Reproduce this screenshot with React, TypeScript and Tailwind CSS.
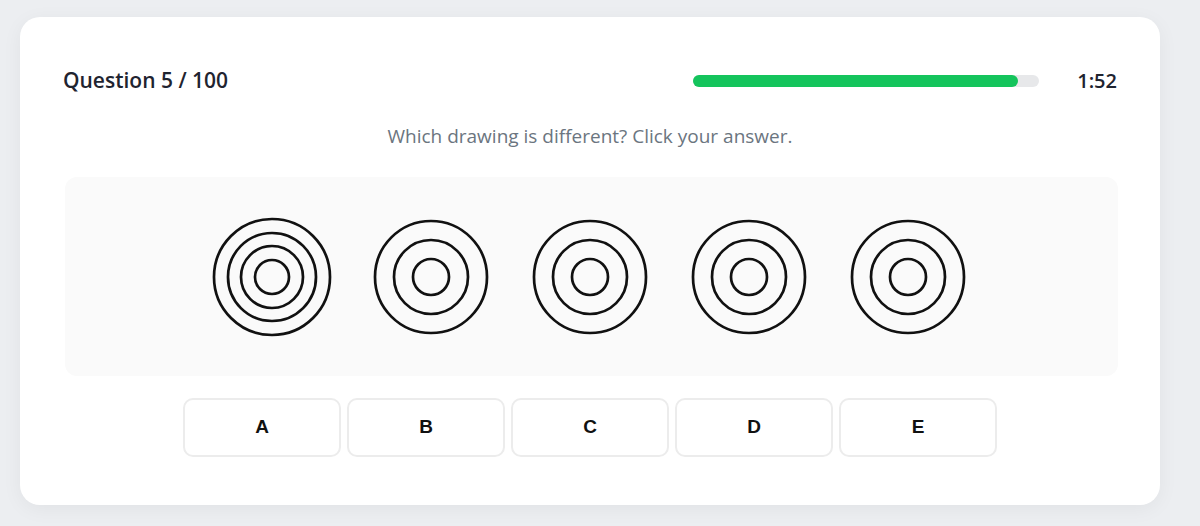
const options = ["A", "B", "C", "D", "E"];

// ring radii for each drawing; the first one has an extra ring
const drawings: number[][] = [
  [58, 44, 31, 17],
  [56, 37, 18],
  [56, 37, 18],
  [56, 37, 18],
  [56, 37, 18],
];

function Rings({ radii }: { radii: number[] }) {
  return (
    <svg width="120" height="120" viewBox="0 0 120 120" className="shrink-0">
      {radii.map((r) => (
        <circle key={r} cx="60" cy="60" r={r} fill="none" stroke="#111" strokeWidth="2.7" />
      ))}
    </svg>
  );
}

export default function App() {
  return (
    <div className="min-h-[526px] w-full bg-[#eceef1] pl-[20px] pt-[17px] pb-[21px]" style={{ fontFamily: '"Open Sans", "Noto Sans", sans-serif' }}>
      <div className="w-[1140px] rounded-[20px] bg-white px-[43px] pt-[50px] pb-[48px] shadow-[0_4px_20px_rgba(0,0,0,0.05)]">
        <div className="flex h-[28px] items-center justify-between">
          <h2 className="text-[21px] font-semibold text-[#1f2430]">Question 5 / 100</h2>
          <div className="flex items-center gap-[38px]">
            <div className="h-[12px] w-[346px] rounded-full bg-[#e7e8ea]">
              <div className="h-full w-[94%] rounded-full bg-[#14c45c]" />
            </div>
            <span className="text-[20px] font-semibold text-[#1f2430]">1:52</span>
          </div>
        </div>

        <p className="mt-[27px] text-center text-[19px] leading-[28px] text-[#6b7580]">
          Which drawing is different? Click your answer.
        </p>

        <div className="ml-[2px] mr-[-1px] mt-[27px] flex h-[199px] items-center justify-center gap-[39px] rounded-[12px] bg-[#fafafa] pr-[3px]">
          {drawings.map((radii, i) => (
            <Rings key={i} radii={radii} />
          ))}
        </div>

        <div className="mt-[22px] flex justify-center gap-[6px]">
          {options.map((o) => (
            <button
              key={o}
              className="h-[59px] w-[158px] rounded-[10px] border-2 border-[#ececec] bg-white text-[19px] font-bold text-[#111]"
              style={{ fontFamily: '"Liberation Sans", Arial, sans-serif' }}
            >
              {o}
            </button>
          ))}
        </div>
      </div>
    </div>
  );
}
